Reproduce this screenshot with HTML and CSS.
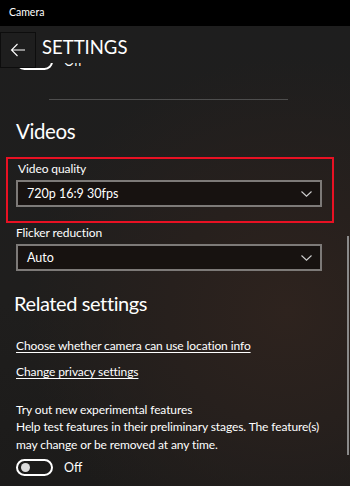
FILE: index.html
```html
<!DOCTYPE html>
<html>
<head>
<meta charset="utf-8">
<link rel="stylesheet" href="styles.css">
</head>
<body>
<div class="titlebar">Camera</div>
<div class="app">
  <div class="header">
    <div class="back">
      <svg width="16" height="14" viewBox="0 0 16 14"><path d="M15 7H1.5M7.5 1L1.5 7L7.5 13" fill="none" stroke="#fff" stroke-width="1.1"/></svg>
    </div>
    <div class="page-title">SETTINGS</div>
  </div>
  <div class="peek">
    <div class="peek-inner">
      <div class="toggle"><span class="knob"></span></div>
      <span class="toggle-label">Off</span>
    </div>
  </div>
  <div class="content">
    <div class="divider"></div>
    <h2 class="section">Videos</h2>
    <div class="highlight">
      <div class="field-label">Video quality</div>
      <div class="select">
        <span>720p 16:9 30fps</span>
        <svg class="chev" width="11" height="6" viewBox="0 0 11 6"><path d="M0.5 0.5L5.5 5.2L10.5 0.5" fill="none" stroke="#cfcfcf" stroke-width="1.1"/></svg>
      </div>
    </div>
    <div class="field-label flick">Flicker reduction</div>
    <div class="select">
      <span>Auto</span>
      <svg class="chev" width="11" height="6" viewBox="0 0 11 6"><path d="M0.5 0.5L5.5 5.2L10.5 0.5" fill="none" stroke="#cfcfcf" stroke-width="1.1"/></svg>
    </div>
    <h2 class="section related">Related settings</h2>
    <a class="link first">Choose whether camera can use location info</a>
    <a class="link second">Change privacy settings</a>
    <div class="exp-title">Try out new experimental features</div>
    <div class="exp-desc">Help test features in their preliminary stages. The feature(s) may change or be removed at any time.</div>
    <div class="toggle-row">
      <div class="toggle"><span class="knob"></span></div>
      <span class="toggle-label">Off</span>
    </div>
  </div>
  <div class="scrollthumb"></div>
</div>
</body>
</html>
```
FILE: styles.css
```css
html, body {
  margin: 0;
  padding: 0;
}
body {
  width: 350px;
  height: 486px;
  overflow: hidden;
  background: #000;
  font-family: Lato, "Noto Sans", sans-serif;
  color: #fff;
}
.titlebar {
  height: 26px;
  line-height: 25px;
  padding-left: 9px;
  font-size: 10.5px;
  background: #000;
  color: #fff;
}
.app {
  position: relative;
  height: 460px;
  overflow: hidden;
  background:
    radial-gradient(ellipse 75% 55% at 82% 62%, #2e231e 0%, #27201d 45%, rgba(30,30,30,0) 100%),
    linear-gradient(180deg, #1e1e1e 0%, #1f1e1d 60%, #1c1b1a 100%);
}
.header {
  height: 37px;
  display: flex;
  align-items: flex-start;
}
.back {
  position: relative;
  z-index: 2;
  box-sizing: border-box;
  margin-top: 6px;
  width: 36px;
  height: 36px;
  border: 1px solid #0d0d0d;
  background: #1e1e1e;
  display: flex;
  align-items: center;
  justify-content: center;
}
.page-title {
  margin-left: 6px;
  margin-top: 9px;
  font-size: 18.5px;
  line-height: 24px;
}
.peek {
  height: 7px;
  overflow: hidden;
}
.peek-inner {
  margin-top: -10px;
  display: flex;
  align-items: center;
  padding-left: 16px;
}
.divider {
  margin: 29px 0 0 49px;
  width: 239px;
  height: 1px;
  background: #4e4e4e;
}
.section {
  margin: 17px 0 0 16px;
  font-size: 20.5px;
  font-weight: 400;
  line-height: 28px;
  letter-spacing: -0.4px;
}
.highlight {
  box-sizing: border-box;
  margin: 12px 0 0 6px;
  width: 328px;
  border: 2px solid #e81123;
  padding: 0 0 14px 8px;
}
.field-label {
  font-size: 12px;
  line-height: 19px;
  letter-spacing: -0.1px;
}
.highlight .field-label {
  margin-left: 2px;
}
.flick {
  margin: 0 0 0 16px;
}
.select {
  box-sizing: border-box;
  margin: 2px 0 0 16px;
  width: 306px;
  height: 27px;
  border: 2px solid #7d7a78;
  background: #171210;
  display: flex;
  align-items: center;
  justify-content: space-between;
  padding: 0 8px 1px 9px;
  font-size: 12.5px;
  line-height: 21px;
}
.highlight .select {
  margin-left: 0;
}
.chev {
  margin-top: 1px;
}
.related {
  margin: 18px 0 0 14px;
  font-size: 20px;
}
.link {
  display: block;
  font-size: 12px;
  line-height: 19px;
  letter-spacing: -0.1px;
  text-decoration: underline;
  text-underline-offset: 2px;
  margin-left: 16px;
  color: #fff;
}
.link.first {
  margin-top: 19px;
}
.link.second {
  margin-top: 7px;
}
.exp-title {
  margin: 20px 0 0 16px;
  font-size: 12px;
  letter-spacing: -0.1px;
  line-height: 17px;
}
.exp-desc {
  margin: 0 0 0 16px;
  width: 324px;
  font-size: 12px;
  letter-spacing: -0.1px;
  line-height: 17.5px;
}
.toggle-row {
  margin: 6px 0 0 16px;
  display: flex;
  align-items: center;
}
.toggle {
  box-sizing: border-box;
  width: 37px;
  height: 17px;
  border: 2px solid #fff;
  border-radius: 9px;
  display: flex;
  align-items: center;
  padding-left: 3px;
}
.knob {
  width: 9px;
  height: 9px;
  border-radius: 50%;
  background: #dcdcdc;
}
.toggle-label {
  margin-left: 11px;
  font-size: 12.5px;
  line-height: 17px;
}
.scrollthumb {
  position: absolute;
  right: 1px;
  top: 210px;
  width: 2px;
  height: 219px;
  background: #8a8a8a;
}
```
